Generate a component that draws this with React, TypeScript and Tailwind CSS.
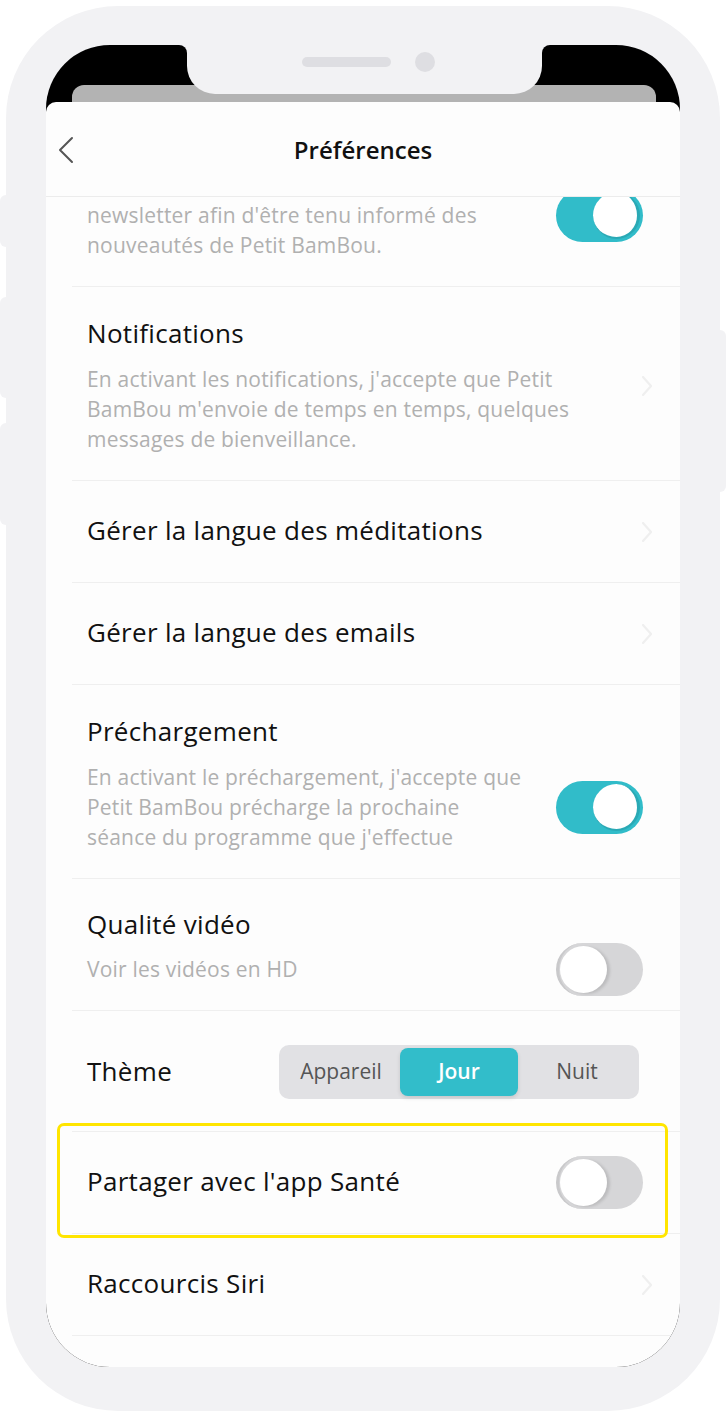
import React from 'react';

const FONT = { fontFamily: '"Open Sans", "Noto Sans", sans-serif' };

function Toggle({ on }: { on: boolean }) {
  return on ? (
    <div className="w-[87px] h-[53px] rounded-full bg-[#31bcc9] flex items-center justify-end pr-[3px] shrink-0">
      <div className="w-[47px] h-[47px] rounded-full bg-white border-r-[3px] border-b-[2px] border-[#2aa9b5]" />
    </div>
  ) : (
    <div className="w-[87px] h-[53px] rounded-full bg-[#d6d6d8] border-l-[3px] border-[#c9c9cb] flex items-center pl-[1px] shrink-0">
      <div className="w-[47px] h-[47px] rounded-full bg-white shadow-[3px_1px_3px_rgba(0,0,0,0.12)]" />
    </div>
  );
}

function Chevron() {
  return (
    <svg width="12" height="22" viewBox="0 0 12 22" className="shrink-0">
      <path d="M2 2l8 9-8 9" fill="none" stroke="#efefef" strokeWidth="2.2" strokeLinecap="round" strokeLinejoin="round" />
    </svg>
  );
}

function Divider() {
  return <div className="h-px bg-[#efefef] ml-[26px]" />;
}

function LinkRow({ label }: { label: string }) {
  return (
    <div className="flex items-center pl-[41px] pr-[27px] h-[101px]">
      <span className="flex-1 text-[26px] tracking-[0.3px] text-[#111] mb-[3px]">{label}</span>
      <Chevron />
    </div>
  );
}

export default function App() {
  return (
    <div className="w-[726px] h-[1419px] bg-white relative overflow-hidden" style={FONT}>
      {/* side buttons */}
      <div className="absolute left-0 top-[195px] w-[8px] h-[52px] rounded-l-[6px] bg-[#f2f2f4]" />
      <div className="absolute left-0 top-[297px] w-[8px] h-[101px] rounded-l-[6px] bg-[#f2f2f4]" />
      <div className="absolute left-0 top-[423px] w-[8px] h-[102px] rounded-l-[6px] bg-[#f2f2f4]" />
      <div className="absolute right-0 top-[330px] w-[8px] h-[162px] rounded-r-[6px] bg-[#f2f2f4]" />

      <div className="ml-[6px] mt-[6px] w-[714px] h-[1405px] rounded-[112px] bg-[#f2f2f4] pt-[39px] px-[40px]">
        <div className="w-[634px] h-[1322px] rounded-[64px] overflow-hidden bg-black flex flex-col">
          {/* top area */}
          <div className="relative h-[57px] shrink-0 flex items-end pl-[26px] pr-[24px]">
            <div className="flex-1 h-[17px] bg-[#b3b3b3] rounded-t-[12px]" />
            <div className="absolute left-[141px] top-0 w-[355px] h-[49px] bg-[#f2f2f4] rounded-b-[28px] flex items-start justify-center gap-[24px] pt-[7px] pl-[8px]">
              <div className="mt-[5px] w-[89px] h-[10px] rounded-full bg-[#dedee2]" />
              <div className="w-[20px] h-[20px] rounded-full bg-[#dedee2]" />
              <div className="absolute -left-[8px] top-0 w-[8px] h-[8px] bg-[#f2f2f4]">
                <div className="w-full h-full bg-black rounded-tr-[8px]" />
              </div>
              <div className="absolute -right-[8px] top-0 w-[8px] h-[8px] bg-[#f2f2f4]">
                <div className="w-full h-full bg-black rounded-tl-[8px]" />
              </div>
            </div>
          </div>

          {/* sheet */}
          <div className="flex-1 bg-[#fdfdfd] rounded-t-[10px] flex flex-col">
            <div className="relative h-[95px] shrink-0 flex items-center justify-center border-b border-[#ececec]">
              <svg width="16" height="28" viewBox="0 0 16 28" className="absolute left-[12px] top-[34px]">
                <path d="M14 2L2 14l12 12" fill="none" stroke="#555" strokeWidth="2" strokeLinecap="round" strokeLinejoin="round" />
              </svg>
              <span className="text-[24px] font-semibold text-[#111] pt-[2px]">Préférences</span>
            </div>

            {/* partial newsletter row, scrolled under the header */}
            <div className="h-[89px] overflow-hidden">
              <div className="-mt-[27px] flex items-center pl-[41px] pr-[37px]">
                <div className="flex-1 text-[21px] tracking-[0.2px] leading-[30px] text-[#b0b0b0]">
                  <div className="h-[30px]" />
                  <div>newsletter afin d'être tenu informé des</div>
                  <div>nouveautés de Petit BamBou.</div>
                </div>
                <Toggle on />
              </div>
            </div>
            <Divider />

            <div className="flex items-center pl-[41px] pr-[27px] pt-[31px] pb-[26px]">
              <div className="flex-1">
                <div className="text-[26px] tracking-[0.3px] leading-[30px] text-[#111]">Notifications</div>
                <div className="mt-[16px] text-[21px] tracking-[0.2px] leading-[30px] text-[#b0b0b0]">
                  <div>En activant les notifications, j'accepte que Petit</div>
                  <div>BamBou m'envoie de temps en temps, quelques</div>
                  <div>messages de bienveillance.</div>
                </div>
              </div>
              <Chevron />
            </div>
            <Divider />
            <LinkRow label="Gérer la langue des méditations" />
            <Divider />
            <LinkRow label="Gérer la langue des emails" />
            <Divider />

            <div className="pl-[41px] pr-[37px] pt-[31px] pb-[26px]">
              <div className="text-[26px] tracking-[0.3px] leading-[30px] text-[#111]">Préchargement</div>
              <div className="mt-[16px] flex items-center">
                <div className="flex-1 text-[21px] tracking-[0.2px] leading-[30px] text-[#b0b0b0]">
                  <div>En activant le préchargement, j'accepte que</div>
                  <div>Petit BamBou précharge la prochaine</div>
                  <div>séance du programme que j'effectue</div>
                </div>
                <Toggle on />
              </div>
            </div>
            <Divider />

            <div className="pl-[41px] pr-[37px] pt-[30px] pb-[14px]">
              <div className="text-[26px] tracking-[0.3px] leading-[30px] text-[#111]">Qualité vidéo</div>
              <div className="mt-[4px] flex items-center">
                <div className="flex-1 text-[21px] tracking-[0.2px] leading-[30px] text-[#b0b0b0] mb-[2px]">Voir les vidéos en HD</div>
                <Toggle on={false} />
              </div>
            </div>
            <Divider />

            <div className="flex items-center pl-[41px] pr-[41px] pt-[34px] pb-[32px]">
              <span className="flex-1 text-[26px] tracking-[0.3px] text-[#111] mb-[2px]">Thème</span>
              <div className="w-[360px] h-[54px] rounded-[10px] bg-[#e1e1e4] p-[3px] flex">
                <div className="flex-1 flex items-center justify-center text-[21px] text-[#555]">Appareil</div>
                <div className="flex-1 flex items-center justify-center text-[21px] font-semibold text-white bg-[#32bdca] rounded-[8px] shadow-[0_2px_4px_rgba(0,0,0,0.12)]">Jour</div>
                <div className="flex-1 flex items-center justify-center text-[21px] text-[#555]">Nuit</div>
              </div>
            </div>
            <Divider />

            <div className="relative flex items-center pl-[41px] pr-[37px] h-[101px]">
              <span className="flex-1 text-[26px] tracking-[0.3px] text-[#111] mb-[3px]">Partager avec l'app Santé</span>
              <Toggle on={false} />
              <div className="absolute left-[11px] right-[12px] top-[-9px] bottom-[-5px] border-[3px] border-[#ffe500] rounded-[7px]" />
            </div>
            <Divider />
            <LinkRow label="Raccourcis Siri" />
            <Divider />
          </div>
        </div>
      </div>
    </div>
  );
}
